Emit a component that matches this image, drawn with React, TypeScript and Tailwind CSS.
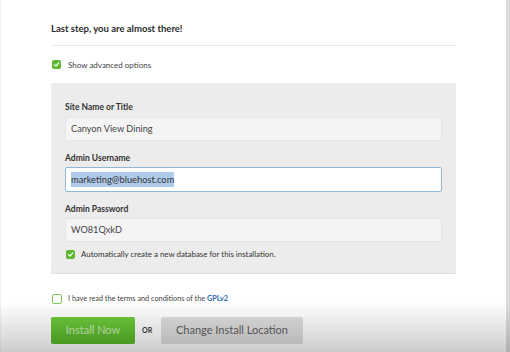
import React from 'react';

function CheckBox({ checked, size = 9 }: { checked: boolean; size?: number }) {
  if (!checked) {
    return (
      <span
        className="inline-block shrink-0 rounded-[2px] border-[1.5px] border-[#7cc55a] bg-white"
        style={{ width: size, height: size }}
      />
    );
  }
  return (
    <span
      className="inline-flex shrink-0 items-center justify-center rounded-[2px] bg-[#5cb82e]"
      style={{ width: size, height: size }}
    >
      <svg width="7" height="7" viewBox="0 0 10 10" fill="none">
        <path d="M2 5.2 L4.2 7.3 L8.2 2.8" stroke="white" strokeWidth="1.8" strokeLinecap="round" strokeLinejoin="round" />
      </svg>
    </span>
  );
}

function Field({ label, children, first }: { label: string; children: React.ReactNode; first?: boolean }) {
  return (
    <div className={first ? '' : 'mt-[12px]'}>
      <div className="h-[10px] text-[8.5px] font-bold leading-[10px] text-[#333]">{label}</div>
      {children}
    </div>
  );
}

export default function App() {
  return (
    <div className="relative flex h-[352px] w-[510px] overflow-hidden bg-white font-['Lato','Liberation_Sans',sans-serif]">
      <div className="w-px bg-[#f2f2f2]" />
      <div className="flex-1 pl-[50px] pt-[22px]">
        <div className="w-[405px]">
          <h1 className="h-[13px] text-[9.5px] font-bold leading-[13px] text-[#2a2a2a]">
            Last step, you are almost there!
          </h1>
          <div className="mt-[10px] h-px bg-[#e8e8e8]" />

          <div className="mt-[14px] flex h-[9px] items-center gap-[7px] pl-px">
            <CheckBox checked />
            <span className="text-[8px] text-[#444]">Show advanced options</span>
          </div>

          <div className="mt-[14px] rounded-[2px] bg-[#ececec] px-[14px] pb-[14px] pt-[19px] shadow-[0_1px_0_#dcdcdc]">
            <Field label="Site Name or Title" first>
              <div className="mt-[5px] flex h-[24px] items-center rounded-[2px] border border-[#e6e6e6] bg-[#f4f4f4] px-[5px] text-[9.2px] text-[#444]">
                Canyon View Dining
              </div>
            </Field>
            <Field label="Admin Username">
              <div className="mt-[4px] flex h-[25px] items-center rounded-[2px] border border-[#8fb7d6] bg-white px-[5px] text-[9.3px] text-[#333]">
                <span className="bg-[#aecbeb] py-[1px]">marketing@bluehost.com</span>
              </div>
            </Field>
            <Field label="Admin Password">
              <div className="mt-[4px] flex h-[24px] items-center rounded-[2px] border border-[#e6e6e6] bg-[#f4f4f4] px-[5px] text-[9.2px] text-[#444]">
                WO81QxkD
              </div>
            </Field>
            <div className="mt-[8px] flex h-[9px] items-center gap-[6px] pl-px">
              <CheckBox checked />
              <span className="text-[7.9px] text-[#333]">
                Automatically create a new database for this installation.
              </span>
            </div>
          </div>

          <div className="mt-[21px] flex h-[10px] items-center gap-[6px] pl-px">
            <CheckBox checked={false} size={10} />
            <span className="text-[7.3px] text-[#444]">
              I have read the terms and conditions of the{' '}
              <span className="font-bold text-[#2b6aa8]">GPLv2</span>
            </span>
          </div>

          <div className="mt-[13px] flex h-[27px] items-center">
            <button className="h-full w-[84px] rounded-[2px] bg-gradient-to-b from-[#6fcb3c] to-[#57b629] text-[11px] text-[#c9ebb4]">
              Install Now
            </button>
            <span className="ml-[7px] w-[18px] text-[7px] font-bold text-[#333]">OR</span>
            <button className="ml-[1px] h-full w-[142px] rounded-[2px] bg-[#dedede] text-[11px] text-[#5f5f5f]">
              Change Install Location
            </button>
          </div>
        </div>
      </div>
      <div className="w-[4px] bg-[#dcdcdc]" />
      <div className="pointer-events-none absolute bottom-0 left-0 h-[50px] w-full bg-gradient-to-b from-transparent to-black/20" />
    </div>
  );
}
